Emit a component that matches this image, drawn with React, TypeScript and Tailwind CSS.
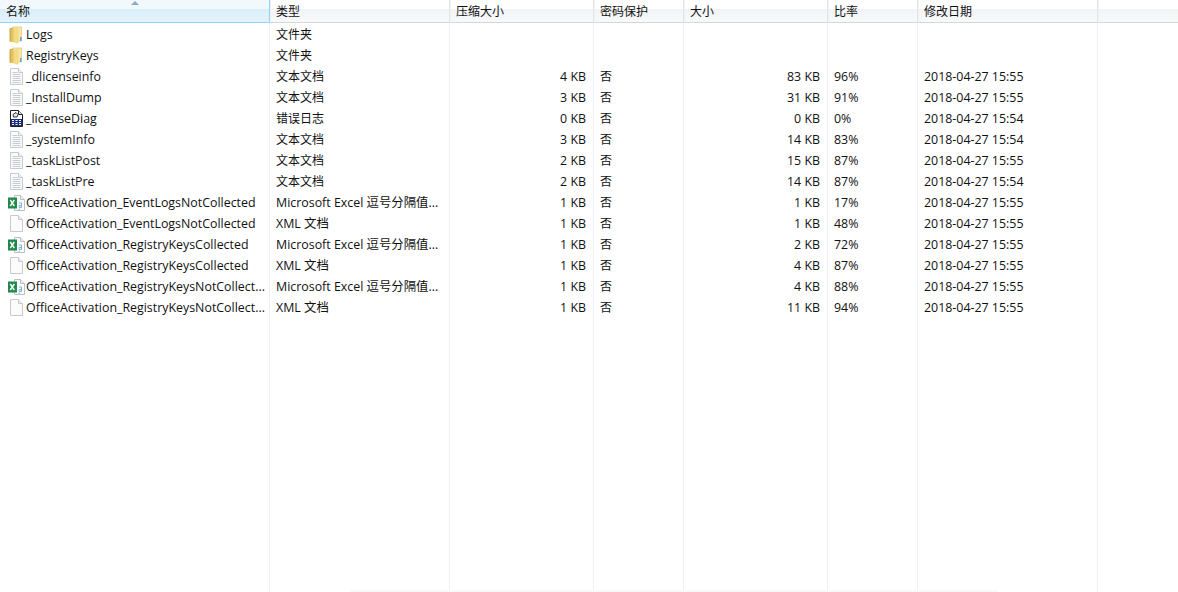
const X = "Microsoft Excel 逗号分隔值...";
const T = "文本文档";
const rows: [string, string, string, string, string, string, string, string][] = [
  ["folder", "Logs", "文件夹", "", "", "", "", ""],
  ["folder", "RegistryKeys", "文件夹", "", "", "", "", ""],
  ["txt", "_dlicenseinfo", T, "4 KB", "否", "83 KB", "96%", "2018-04-27 15:55"],
  ["txt", "_InstallDump", T, "3 KB", "否", "31 KB", "91%", "2018-04-27 15:55"],
  ["err", "_licenseDiag", "错误日志", "0 KB", "否", "0 KB", "0%", "2018-04-27 15:54"],
  ["txt", "_systemInfo", T, "3 KB", "否", "14 KB", "83%", "2018-04-27 15:54"],
  ["txt", "_taskListPost", T, "2 KB", "否", "15 KB", "87%", "2018-04-27 15:55"],
  ["txt", "_taskListPre", T, "2 KB", "否", "14 KB", "87%", "2018-04-27 15:54"],
  ["xls", "OfficeActivation_EventLogsNotCollected", X, "1 KB", "否", "1 KB", "17%", "2018-04-27 15:55"],
  ["blank", "OfficeActivation_EventLogsNotCollected", "XML 文档", "1 KB", "否", "1 KB", "48%", "2018-04-27 15:55"],
  ["xls", "OfficeActivation_RegistryKeysCollected", X, "1 KB", "否", "2 KB", "72%", "2018-04-27 15:55"],
  ["blank", "OfficeActivation_RegistryKeysCollected", "XML 文档", "1 KB", "否", "4 KB", "87%", "2018-04-27 15:55"],
  ["xls", "OfficeActivation_RegistryKeysNotCollect...", X, "1 KB", "否", "4 KB", "88%", "2018-04-27 15:55"],
  ["blank", "OfficeActivation_RegistryKeysNotCollect...", "XML 文档", "1 KB", "否", "11 KB", "94%", "2018-04-27 15:55"],
];

function Icon({ kind }: { kind: string }) {
  if (kind === "folder")
    return (
      <svg width="14" height="18" viewBox="0 0 14 18" className="shrink-0">
        <path d="M4 1h8.5v14H4z" fill="#f7e7a4" stroke="#d9bf6a" strokeWidth="0.6" />
        <path d="M0.5 2.5L4 1.5V15L0.5 16z" fill="#d2ad45" />
        <path d="M2 3.5l6 -1.5 1.5 .5V17l-1.5 .5L2 15.5z" fill="#f3db84" />
        <path d="M2 3.5l2.5 -.6V16.2L2 15.5z" fill="#e2c162" />
        <path d="M11 11h1.6v4H11z" fill="#5fa8de" />
      </svg>
    );
  if (kind === "xls")
    return (
      <svg width="17" height="16" viewBox="0 0 17 16" className="shrink-0">
        <path d="M6.5.5h6l4 4v11h-10z" fill="#fbfcfc" stroke="#bcc0c4" />
        <path d="M12.5.5v4h4" fill="#eef1f3" stroke="#bcc0c4" />
        <rect x="0" y="2.5" width="9" height="11" fill="#1f8a4c" />
        <path d="M2.3 5l4 6M6.3 5l-4 6" stroke="#fff" strokeWidth="1.4" />
        <path d="M11 8h2.5v4.5H11.2V10.5h2.3M11.4 13.5l-.5 1.5" fill="none" stroke="#7db2d6" />
      </svg>
    );
  if (kind === "err")
    return (
      <svg width="13" height="17" viewBox="0 0 13 17" className="shrink-0">
        <path d="M.5.5h8l4 4v12H.5z" fill="#fff" stroke="#222" />
        <path d="M8.5.5v4h4" fill="#ddd" stroke="#222" />
        <path d="M3 4.5l3-2 2 2-1 2.5H3.5z" fill="#e8e8e8" stroke="#333" />
        <rect x="1" y="9" width="11" height="7" fill="#172c84" />
        <path d="M2 10.5h2M2 12.5h2M2 14.5h2M5.5 10.5h2M5.5 12.5h2M5.5 14.5h2M9 10.5h2M9 12.5h2M9 14.5h2" stroke="#fff" />
      </svg>
    );
  return (
    <svg width="13" height="17" viewBox="0 0 13 17" className="shrink-0">
      <path d="M.5.5h8l4 4v12H.5z" fill="#fbfbfc" stroke="#c6c9cd" />
      <path d="M8.5.5v4h4" fill="#f0f1f3" stroke="#c6c9cd" />
      {kind === "txt" && (
        <path d="M2.5 4.5h5M2.5 6.5h8M2.5 8.5h8M2.5 10.5h8M2.5 12.5h8M2.5 14.5h8" stroke="#c3cbd3" />
      )}
    </svg>
  );
}

const font = { fontFamily: '"Open Sans","Noto Sans CJK SC",sans-serif' };

function L({ children }: { children: React.ReactNode }) {
  return <span className="text-[12.4px] leading-[18px]">{children}</span>;
}

function Head({ label, active }: { label: string; active?: boolean }) {
  return (
    <div
      className={
        active
          ? "relative h-[23px] pl-[6px] pt-[2px] flex items-center text-[12px] text-[#111] border-b border-r border-[#8fd4f5] bg-[linear-gradient(#f2f9fd_0,#f2f9fd_9px,#d9eefa_9px,#e4f3fb_100%)]"
          : "h-[23px] pl-[5px] pt-[2px] flex items-center text-[12px] text-[#111] border-b border-r border-l border-b-[#d5d6d8] border-r-[#e4e5e7] border-l-[#f0f1f2] bg-[linear-gradient(#ffffff_0,#ffffff_9px,#f2f3f5_9px,#f8f9fb_100%)]"
      }
    >
      {active && (
        <svg width="8" height="4" viewBox="0 0 8 4" className="absolute left-[131px] top-[1px]">
          <path d="M4 0l4 4H0z" fill="#8fa9bf" />
        </svg>
      )}
      {label}
    </div>
  );
}

function Column({
  width,
  label,
  cell,
  right,
  active,
}: {
  width: string;
  label: string;
  cell: (r: (typeof rows)[number]) => React.ReactNode;
  right?: boolean;
  active?: boolean;
}) {
  return (
    <div className={`${width} shrink-0 flex flex-col`}>
      <Head label={label} active={active} />
      <div className="flex-1 pt-px border-r border-[#eaf0f6]">
        {rows.map((r, i) => (
          <div
            key={i}
            className={
              right
                ? "h-[21px] flex items-center justify-end pr-[7px] text-[12px] text-[#111] whitespace-nowrap"
                : "h-[21px] flex items-center pl-[6px] text-[12px] text-[#111] whitespace-nowrap overflow-hidden"
            }
          >
            {cell(r)}
          </div>
        ))}
      </div>
    </div>
  );
}

export default function App() {
  return (
    <div className="relative w-[1178px] h-[592px] overflow-hidden bg-white flex" style={font}>
      <Column
        width="w-[270px]"
        label="名称"
        active
        cell={(r) => (
          <div className="flex items-center">
            <div className="w-[20px] flex justify-center">
              <Icon kind={r[0]} />
            </div>
            <L>{r[1]}</L>
          </div>
        )}
      />
      <Column
        width="w-[180px]"
        label="类型"
        cell={(r) => (/[A-Za-z]/.test(r[2]) ? <L>{r[2]}</L> : <span>{r[2]}</span>)}
      />
      <Column width="w-[144px]" label="压缩大小" right cell={(r) => (r[3] ? <L>{r[3]}</L> : null)} />
      <Column width="w-[90px]" label="密码保护" cell={(r) => r[4]} />
      <Column width="w-[144px]" label="大小" right cell={(r) => (r[5] ? <L>{r[5]}</L> : null)} />
      <Column width="w-[90px]" label="比率" cell={(r) => (r[6] ? <L>{r[6]}</L> : null)} />
      <Column width="w-[180px]" label="修改日期" cell={(r) => (r[7] ? <L>{r[7]}</L> : null)} />
      <div className="flex-1">
        <div className="h-[23px] border-b border-l border-b-[#d5d6d8] border-l-[#f0f1f2] bg-[linear-gradient(#ffffff_0,#ffffff_9px,#f2f3f5_9px,#f8f9fb_100%)]" />
      </div>
      <div className="absolute left-[350px] right-[180px] bottom-0 h-[2px] bg-[#f9f9f9]" />
    </div>
  );
}
